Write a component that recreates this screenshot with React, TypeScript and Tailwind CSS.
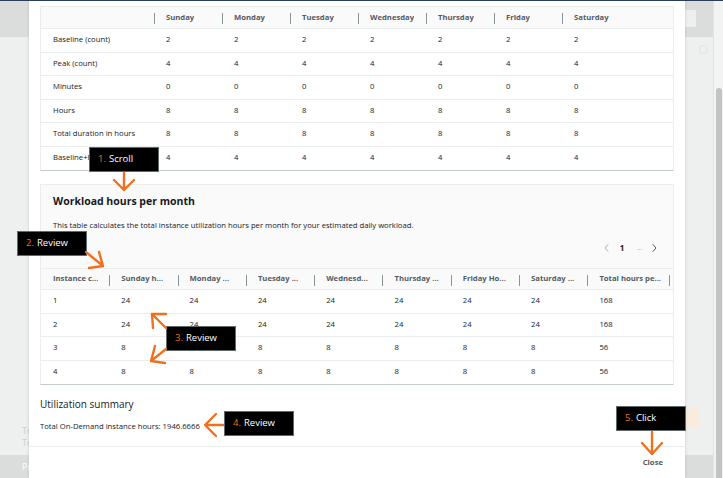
import React from 'react'

const days = ['Sunday', 'Monday', 'Tuesday', 'Wednesday', 'Thursday', 'Friday', 'Saturday']

const dailyRows: [string, string][] = [
  ['Baseline (count)', '2'],
  ['Peak (count)', '4'],
  ['Minutes', '0'],
  ['Hours', '8'],
  ['Total duration in hours', '8'],
  ['Baseline+Peak', '4'],
]

const monthHeaders = [
  'Instance c...',
  'Sunday h...',
  'Monday ...',
  'Tuesday ...',
  'Wednesd...',
  'Thursday ...',
  'Friday Ho...',
  'Saturday ...',
  'Total hours pe...',
]

const monthRows = [
  ['1', '24', '168'],
  ['2', '24', '168'],
  ['3', '8', '56'],
  ['4', '8', '56'],
]

function Callout({ n, label, className }: { n: number; label: string; className: string }) {
  return (
    <div
      className={`absolute z-20 flex h-[25px] w-[70px] items-center border border-[#5f6b6b] bg-black pl-[8px] text-[9.5px] text-white ${className}`}
    >
      <span className="text-[#ec7211]">{n}.</span>
      <span className="ml-[3px]">{label}</span>
    </div>
  )
}

function Arrows() {
  return (
    <svg className="pointer-events-none absolute inset-0 z-20" width="723" height="478" viewBox="0 0 723 478">
      <g fill="none" stroke="#f0701e" strokeWidth="2.4" strokeLinecap="round" strokeLinejoin="round">
        {/* 1 scroll */}
        <path d="M124 173 V190 M114 180 L124 190 L134 180" />
        {/* 2 review */}
        <path d="M86 252 L103 266 M89 268 L103 266 L99 252" />
        {/* 3 review up */}
        <path d="M166 328 L152 314 M166 314 L152 314 L153 328" />
        {/* 3 review down */}
        <path d="M166 349 L151 361 M155 346 L151 361 L165 363" />
        {/* 4 review */}
        <path d="M223 425 H206 M216 414 L205 425 L216 436" />
        {/* 5 click */}
        <path d="M652 432 V454 M642 443 L652 454 L662 443" />
      </g>
    </svg>
  )
}

function Chevron({ dir, color }: { dir: 'l' | 'r'; color: string }) {
  return (
    <svg width="5" height="8" viewBox="0 0 5 8" className="block">
      <path
        d={dir === 'l' ? 'M4 0.5 L1 4 L4 7.5' : 'M1 0.5 L4 4 L1 7.5'}
        fill="none"
        stroke={color}
        strokeWidth="1"
        strokeLinecap="round"
        strokeLinejoin="round"
      />
    </svg>
  )
}

function HeaderCell({ children, first }: { children: React.ReactNode; first?: boolean }) {
  return (
    <div className="relative flex items-center pl-[12px] font-bold text-[#545b64]">
      {!first && <span className="absolute left-0 top-[6px] h-[11px] w-px bg-[#879596]" />}
      <span className="truncate">{children}</span>
    </div>
  )
}

function DailyTable() {
  return (
    <div className="mt-[6px] border border-b-[#c5cccc] border-[#eaeded] bg-white text-[7.7px] text-[#16191f]">
      <div className="grid h-[22px] grid-cols-[113px_repeat(6,68px)_1fr] border-b border-[#eaeded] bg-[#fafafa]">
        <div />
        {days.map((d) => (
          <HeaderCell key={d}>{d}</HeaderCell>
        ))}
      </div>
      {dailyRows.map(([label, v], i) => (
        <div
          key={label}
          className={`grid h-[23.5px] grid-cols-[113px_repeat(6,68px)_1fr] items-center ${i < dailyRows.length - 1 ? 'border-b border-[#eaeded]' : ''}`}
        >
          <div className="pl-[12px]">{label}</div>
          {days.map((d) => (
            <div key={d} className="pl-[12px]">
              {v}
            </div>
          ))}
        </div>
      ))}
    </div>
  )
}

function MonthTable() {
  return (
    <div className="mt-[13px] border border-b-[#c5cccc] border-[#eaeded] bg-[#fafafa] text-[#16191f]">
      <div className="px-[12px] pt-[8px]">
        <h2 className="text-[10.5px] font-bold leading-[16px]">Workload hours per month</h2>
        <p className="mt-[10px] text-[7.7px] leading-[12px]">
          This table calculates the total instance utilization hours per month for your estimated daily workload.
        </p>
        <div className="mt-[10px] flex h-[14px] items-center justify-end pr-[4px] text-[8px]">
          <Chevron dir="l" color="#aab7b8" />
          <span className="ml-[11px] font-bold">1</span>
          <span className="ml-[13px] text-[6px] text-[#687078]">...</span>
          <span className="ml-[10px]">
            <Chevron dir="r" color="#545b64" />
          </span>
        </div>
      </div>
      <div className="mt-[13px] text-[7.7px]">
        <div className="grid h-[22px] grid-cols-[repeat(8,68.3px)_1fr] border-b border-t border-[#eaeded]">
          {monthHeaders.map((h, i) => (
            <HeaderCell key={h} first={i === 0}>
              {h}
              {i === monthHeaders.length - 1 && (
                <span className="absolute right-[3px] top-[6px] h-[11px] w-px bg-[#879596]" />
              )}
            </HeaderCell>
          ))}
        </div>
        {monthRows.map(([n, v, total], i) => (
          <div
            key={n}
            className={`grid h-[23.5px] grid-cols-[repeat(8,68.3px)_1fr] items-center bg-white ${i < monthRows.length - 1 ? 'border-b border-[#eaeded]' : ''}`}
          >
            <div className="pl-[12px]">{n}</div>
            {days.map((d) => (
              <div key={d} className="pl-[12px]">
                {v}
              </div>
            ))}
            <div className="pl-[12px]">{total}</div>
          </div>
        ))}
      </div>
    </div>
  )
}

export default function App() {
  return (
    <div className="relative flex h-[478px] w-[723px] overflow-hidden bg-[#eef0f0] font-['Open_Sans',sans-serif]">
      <div className="absolute left-0 right-0 top-0 z-30 h-px bg-[#2a3d5a]" />

      {/* page behind, left */}
      <div className="flex w-[29px] flex-col">
        <div className="h-[37px] bg-[#dbdddd]" />
        <div className="flex flex-1 flex-col justify-end pb-[6px] pl-[22px] text-[9px] leading-[12px] text-[#c9cece]">
          <span>To</span>
          <span>To</span>
        </div>
        <div className="flex h-[23px] items-center bg-[#dbdddd] pl-[22px] text-[9px] text-white">Pr</div>
      </div>

      {/* modal */}
      <div className="z-10 flex w-[656px] flex-col bg-white shadow-[0_0_3px_rgba(0,0,0,0.15)]">
        <div className="px-[11px]">
          <DailyTable />
          <MonthTable />
          <div className="pt-[11px] text-[#16191f]">
            <h3 className="text-[10px] leading-[16px]">Utilization summary</h3>
            <p className="mt-[8px] text-[7.7px] leading-[12px]">Total On-Demand instance hours: 1946.6666</p>
          </div>
        </div>
        <div className="mt-[14px] border-t border-[#eaeded]" />
        <div className="flex justify-end pr-[22px] pt-[10px]">
          <span className="text-[7.7px] font-bold text-[#545b64]">Close</span>
        </div>
      </div>

      {/* page behind, right */}
      <div className="flex flex-1">
        <div className="flex w-[28px] flex-col">
          <div className="h-[37px] bg-[#dbdddd] pt-[10px]">
            <div className="h-[17px] w-[11px] bg-[#eef0f0]" />
          </div>
          <div className="flex flex-1 flex-col">
            <div className="ml-[14px] mt-[8px] h-[9px] w-[9px] rounded-full border border-[#dfe2e2]" />
            <div className="mt-[354px] h-[20px] w-[15px] bg-[#f8ecdf]" />
          </div>
          <div className="h-[23px] bg-[#dbdddd]" />
        </div>
        <div className="flex flex-1 justify-end border-l border-[#e2e4e4] bg-[#f3f3f3] pr-[1px] pt-[88px]">
          <div className="h-full w-[6px] rounded-t-[3px] bg-[#c3c3c3]" />
        </div>
      </div>

      <Callout n={1} label="Scroll" className="left-[89px] top-[147px]" />
      <Callout n={2} label="Review" className="left-[17px] top-[231px]" />
      <Callout n={3} label="Review" className="left-[166px] top-[326px]" />
      <Callout n={4} label="Review" className="left-[224px] top-[411px]" />
      <Callout n={5} label="Click" className="left-[616px] top-[406px]" />
      <Arrows />
    </div>
  )
}
